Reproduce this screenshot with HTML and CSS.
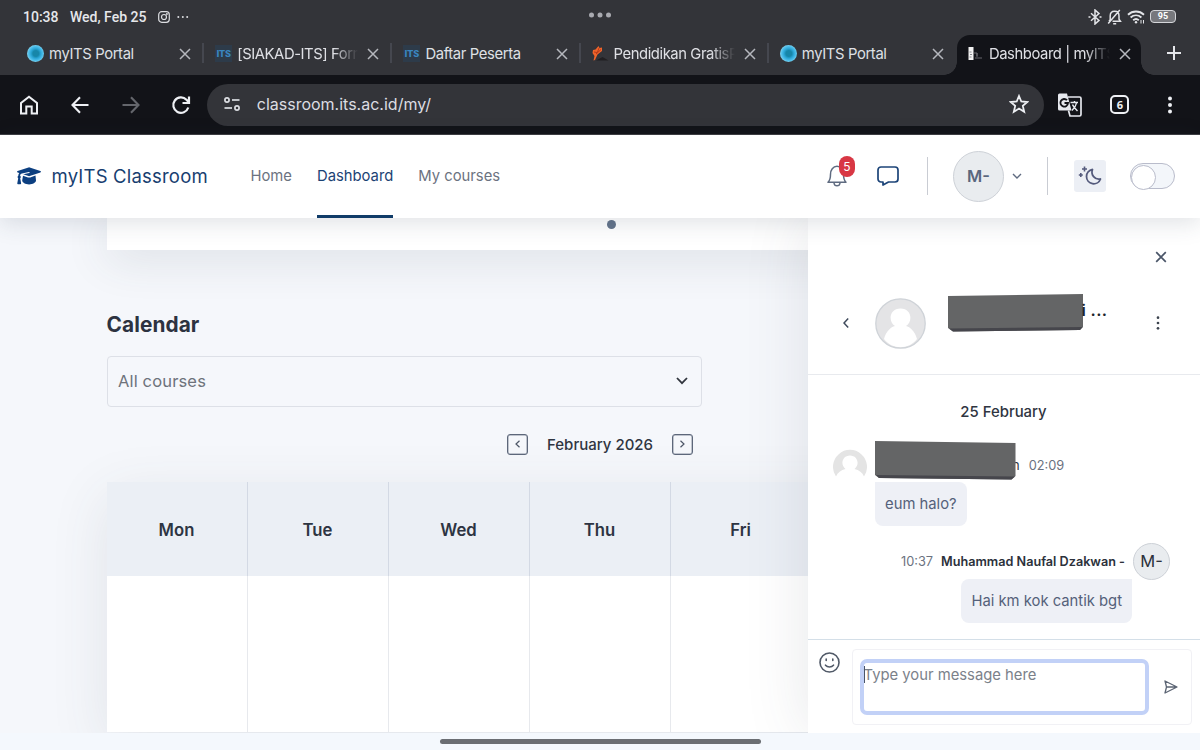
FILE: index.html
```html
<!DOCTYPE html>
<html lang="en">
<head>
    <meta charset="UTF-8">
    <meta name="viewport" content="width=device-width, initial-scale=1.0">
    <title>Dashboard | myITS Classroom</title>
    <link rel="stylesheet" href="styles.css">
</head>
<body>
    <!-- Status bar -->
    <div class="status-bar">
        <span class="clock">10:38</span>
        <span class="date">Wed, Feb 25</span>
        <svg class="insta" width="12" height="12" viewBox="0 0 12 12" fill="none" stroke="#dcdde1" stroke-width="1.2">
            <rect x="0.7" y="0.7" width="10.6" height="10.6" rx="3"/>
            <circle cx="6" cy="6" r="2.5"/>
            <circle cx="8.9" cy="3.1" r="0.4"/>
        </svg>
        <svg width="12" height="4" viewBox="0 0 12 4" fill="#dcdde1">
            <circle cx="1.3" cy="2" r="1"/><circle cx="5.8" cy="2" r="1"/><circle cx="10.2" cy="2" r="1"/>
        </svg>
        <svg class="window-dots" width="24" height="6" viewBox="0 0 24 6" fill="#a9aab0">
            <circle cx="3.5" cy="3" r="2.5"/><circle cx="12" cy="3" r="2.5"/><circle cx="20.5" cy="3" r="2.5"/>
        </svg>
        <div class="status-icons">
            <svg width="14" height="16" viewBox="0 0 14 16" fill="none" stroke="#e3e4e8" stroke-width="1.5">
                <path d="M3 4.2 11 11.4 7 15V1l4 3.6L3 11.8"/>
                <path d="M.5 8h2M11.5 8h2"/>
            </svg>
            <svg width="15" height="16" viewBox="0 0 15 16" fill="none" stroke="#e3e4e8" stroke-width="1.5">
                <path d="M3.2 11V7c0-3 2-4.8 4.4-4.8S12 4 12 7v3.2l1.4 2H5.5M2 12.2l1.2-1.4M6.2 14.7h3M12.8 1 1.2 14.6"/>
            </svg>
            <svg width="18" height="16" viewBox="0 0 18 16" fill="none" stroke="#e3e4e8" stroke-width="1.9">
                <path d="M1 5.700c4.600-4.200 11.400-4.200 16 0M3.600 8.500c3.200-2.900 7.600-2.900 10.800 0M6.200 11.200c1.700-1.500 3.900-1.500 5.600 0"/>
                <circle cx="9" cy="13.2" r="1.2" fill="#e3e4e8" stroke="none"/>
                <path d="M14 11v3.5M16.5 11v3.5" stroke-width="1"/>
            </svg>
            <div class="battery">95</div>
        </div>
    </div>

    <!-- Browser tabs -->
    <div class="tabs">
        <div class="tab">
            <span class="favicon favicon-portal"></span>
            <span class="tab-title">myITS Portal</span>
            <svg class="tab-close" width="12" height="12" viewBox="0 0 12 12"><path d="M1 1l10 10M11 1 1 11"/></svg>
        </div>
        <div class="tab">
            <span class="favicon favicon-its">ITS</span>
            <span class="tab-title fade">[SIAKAD-ITS] Form</span>
            <svg class="tab-close" width="12" height="12" viewBox="0 0 12 12"><path d="M1 1l10 10M11 1 1 11"/></svg>
        </div>
        <div class="tab">
            <span class="favicon favicon-its">ITS</span>
            <span class="tab-title">Daftar Peserta</span>
            <svg class="tab-close" width="12" height="12" viewBox="0 0 12 12"><path d="M1 1l10 10M11 1 1 11"/></svg>
        </div>
        <div class="tab">
            <svg class="favicon" width="17" height="17" viewBox="0 0 17 17">
                <path d="M4 15.5h12.500l-6-3.500z" fill="#211f22"/>
                <path d="M1.500 15.500 2.500 11 .5 8 1 5l2.500-.5L6.500 1l1 2 2.500-.5V6L5.500 9.500 3 15z" fill="#f0642a"/>
                <path d="M2 7l3 .5M4 9l5-4.500M7 3 5.500 7" stroke="#a92f16" stroke-width=".8"/>
            </svg>
            <span class="tab-title fade">Pendidikan GratisP</span>
            <svg class="tab-close" width="12" height="12" viewBox="0 0 12 12"><path d="M1 1l10 10M11 1 1 11"/></svg>
        </div>
        <div class="tab">
            <span class="favicon favicon-portal"></span>
            <span class="tab-title">myITS Portal</span>
            <svg class="tab-close" width="12" height="12" viewBox="0 0 12 12"><path d="M1 1l10 10M11 1 1 11"/></svg>
        </div>
        <div class="tab active">
            <svg class="favicon" width="17" height="17" viewBox="0 0 17 17">
                <rect x="1.500" y="2" width="5" height="13" fill="#f2f2f2"/>
                <path d="M2.500 7h2M3 9.500h2M2.500 12h2" stroke="#88898e"/>
                <path d="M7 8h3v3M8 13h7M10 8v4" stroke="#66676d" fill="none"/>
            </svg>
            <span class="tab-title fade">Dashboard | myITS</span>
            <svg class="tab-close" width="12" height="12" viewBox="0 0 12 12"><path d="M1 1l10 10M11 1 1 11"/></svg>
        </div>
        <svg class="new-tab" width="14" height="14" viewBox="0 0 14 14"><path d="M7 0v14M0 7h14"/></svg>
    </div>

    <!-- Toolbar -->
    <div class="toolbar">
        <div class="tool">
            <svg width="20" height="20" viewBox="0 0 20 20" fill="none" stroke="#eef0f4" stroke-width="2">
                <path d="M2 18.500V8l8-6.300L18 8v10.500h-5.300v-7H7.300v7z"/>
            </svg>
        </div>
        <div class="tool">
            <svg width="18" height="18" viewBox="0 0 18 18" fill="none" stroke="#eef0f4" stroke-width="2.1">
                <path d="M17.500 9H2M9 1.300 1.500 9 9 16.700"/>
            </svg>
        </div>
        <div class="tool">
            <svg width="18" height="18" viewBox="0 0 18 18" fill="none" stroke="#64666c" stroke-width="2.1">
                <path d="M.5 9H16M9 1.300 16.500 9 9 16.700"/>
            </svg>
        </div>
        <div class="tool">
            <svg width="20" height="20" viewBox="0 0 20 20" fill="none" stroke="#eef0f4" stroke-width="2.2">
                <path d="M17.300 12.500A7.700 7.700 0 1 1 15.500 4.700L18 7.500M18 1.500V8h-6.500"/>
            </svg>
        </div>
        <div class="address">
            <svg width="16" height="14" viewBox="0 0 16 14" fill="none" stroke="#dcdee3" stroke-width="1.7">
                <circle cx="3" cy="3" r="2.100"/><path d="M8 3h7.500"/>
                <circle cx="13" cy="11" r="2.100"/><path d="M.5 11H8"/>
            </svg>
            <span class="url">classroom.its.ac.id/my/</span>
            <svg width="20" height="20" viewBox="0 0 20 20" fill="none" stroke="#eef0f4" stroke-width="1.8">
                <path d="M10 2l2.300 5.500 6 .5-4.500 3.900 1.400 5.900-5.200-3.200-5.200 3.200 1.400-5.900L1.700 8l6-.5z"/>
            </svg>
        </div>
        <div class="tool">
            <svg width="25" height="24" viewBox="0 0 25 24">
                <path d="M2.500.5H10l4.500 17h-12A1.500 1.500 0 0 1 1 16V2A1.500 1.500 0 0 1 2.500.5z" fill="#e6e8ee"/>
                <path d="M11 4h11.500A1.500 1.500 0 0 1 24 5.500v16a1.500 1.500 0 0 1-1.500 1.500H13l-1.500-5.500" fill="none" stroke="#e6e8ee" stroke-width="1.7"/>
                <path d="M10 7.200A3.800 3.800 0 1 0 11 10H7.500" fill="none" stroke="#121318" stroke-width="1.9"/>
                <path d="M13.500 9.500h7.500M17.500 8v1.500M19.500 10c-.6 3.500-2.500 5.500-4.500 7.500M15.500 11.500c1 2.500 3 4.500 5 6.500" fill="none" stroke="#e6e8ee" stroke-width="1.4"/>
            </svg>
        </div>
        <div class="tool">
            <div class="tab-count">6</div>
        </div>
        <div class="tool">
            <svg width="4" height="18" viewBox="0 0 4 18" fill="#eef0f4">
                <circle cx="2" cy="2.500" r="2"/><circle cx="2" cy="9" r="2"/><circle cx="2" cy="15.500" r="2"/>
            </svg>
        </div>
    </div>

    <!-- Site header -->
    <header class="site-header">
        <svg width="24" height="18" viewBox="0 0 24 18" fill="#0c3f80">
            <path d="M11.500.4a2 2 0 0 1 1.200 0l10.700 3.700c.7.300.7 1 0 1.300L12.700 9.100a2 2 0 0 1-1.200 0L6.200 7.300l6-1.200c.8-.2.600-1.200-.2-1.100L5 6.400c-1.200.3-1.900 1.200-1.900 2.400.9.600.9 1.800.1 2.400l.9 5.100c.1.500-.2.900-.7.900H1c-.5 0-.8-.4-.7-.9l.9-5.100c-.8-.6-.8-1.800.1-2.400 0-1.100.3-2 1-2.800L.6 5.400c-.7-.3-.7-1 0-1.300z"/>
            <path d="M6 8.700l5 1.700a3.500 3.500 0 0 0 2.200 0l5.300-1.800.5 5c0 2-3.200 3.800-6.900 3.800s-6.900-1.800-6.900-3.800z"/>
        </svg>
        <a class="brand">myITS Classroom</a>
        <nav class="nav">
            <a>Home</a>
            <a class="current">Dashboard</a>
            <a>My courses</a>
        </nav>
        <div class="user-menu">
            <div class="bell">
                <svg width="20" height="22" viewBox="0 0 20 22" fill="none" stroke="#5f6b80" stroke-width="1.5" stroke-linejoin="round">
                    <path d="M1 17.200h18c-1.900-1.700-2.500-4-2.500-8C16.500 5 14 1.300 10 1.300S3.500 5 3.500 9.200c0 4-.6 6.300-2.500 8zM7 18c.5 3.800 5.500 3.800 6 0"/>
                </svg>
                <span class="badge">5</span>
            </div>
            <svg class="chat" width="22" height="20" viewBox="0 0 22 20" fill="none" stroke="#1c4478" stroke-width="1.7" stroke-linejoin="round">
                <path d="M4 1h14a3 3 0 0 1 3 3v9a3 3 0 0 1-3 3h-6.500L6 19v-3H4a3 3 0 0 1-3-3V4a3 3 0 0 1 3-3z"/>
            </svg>
            <span class="divider"></span>
            <span class="avatar">M-</span>
            <svg class="caret" width="10" height="6" viewBox="0 0 10 6" fill="none" stroke="#5f6b80" stroke-width="1.4"><path d="M1 1l4 4 4-4"/></svg>
            <span class="divider"></span>
            <span class="moon">
                <svg width="24" height="22" viewBox="0 0 24 22" fill="none" stroke="#545a7c" stroke-width="1.8">
                    <path d="M14.500 4.500A7.200 7.200 0 1 0 22.500 14 7 7 0 0 1 14.500 4.500z" stroke-linejoin="round"/>
                    <path d="M6.500 1.500v5M4 4h5M2.800 8v4M.8 10h4" stroke-width="1.6"/>
                </svg>
            </span>
            <span class="toggle"></span>
        </div>
    </header>

    <!-- Page -->
    <div class="page">
        <main class="content">
            <section class="slide-card"><span class="dot"></span></section>
            <h2>Calendar</h2>
            <div class="select">
                All courses
                <svg width="12" height="8" viewBox="0 0 12 8" fill="none" stroke="#30353d" stroke-width="1.8"><path d="M1 1l5 5.200L11 1"/></svg>
            </div>
            <div class="month">
                <span class="month-btn"><svg width="5" height="8" viewBox="0 0 5 8"><path d="M4.500.7 1 4l3.500 3.300"/></svg></span>
                <span class="month-name">February 2026</span>
                <span class="month-btn"><svg width="5" height="8" viewBox="0 0 5 8"><path d="M.5.7 4 4 .5 7.300"/></svg></span>
            </div>
            <div class="calendar">
                <div class="day">Mon</div>
                <div class="day">Tue</div>
                <div class="day">Wed</div>
                <div class="day">Thu</div>
                <div class="day">Fri</div>
                <div class="day">Sat</div>
                <div class="day">Sun</div>
                <div class="cell"></div>
                <div class="cell"></div>
                <div class="cell"></div>
                <div class="cell"></div>
                <div class="cell"></div>
                <div class="cell"></div>
                <div class="cell"></div>
            </div>
        </main>

        <!-- Message drawer -->
        <aside class="drawer">
            <div class="drawer-head">
                <svg class="drawer-close" width="12" height="12" viewBox="0 0 12 12"><path d="M1.200 1.200l9.600 9.600M10.800 1.200 1.200 10.800"/></svg>
                <div class="contact">
                    <svg width="6" height="10" viewBox="0 0 6 10" fill="none" stroke="#3f4a5c" stroke-width="1.5"><path d="M5.200.5 1 5l4.200 4.500"/></svg>
                    <svg class="contact-photo" width="51" height="51" viewBox="0 0 51 51">
                        <circle cx="25.500" cy="25.500" r="24.800" fill="#e4e4e6"/>
                        <path d="M9 41c2-8 7-12 11-13-7-4-6-17.500 5.500-17.500S38 24 31 28c4 1 9 5 11 13-8 11-25 11-33 0z" fill="#fff"/>
                        <circle cx="25.500" cy="25.500" r="24.700" fill="none" stroke="#cfd3d8" stroke-width="1.300"/>
                    </svg>
                    <svg class="redact" width="136" height="38" viewBox="0 0 136 38">
                        <path d="M0 2 135 0v33l-3 3L5 37.500 0 34z" fill="#646566"/>
                        <path d="M1 34.500 134.500 33l-2.500 3L5 37.500z" fill="#46464c"/>
                    </svg>
                    <span class="contact-tail">i ...</span>
                    <svg class="kebab" width="4" height="14" viewBox="0 0 4 14" fill="#3c434e">
                        <circle cx="2" cy="1.700" r="1.350"/><circle cx="2" cy="7" r="1.350"/><circle cx="2" cy="12.300" r="1.350"/>
                    </svg>
                </div>
            </div>
            <div class="messages">
                <div class="msg-date">25 February</div>
                <div class="sender">
                    <svg class="sender-photo" width="34" height="34" viewBox="0 0 34 34">
                        <path d="M3 28.500A17 17 0 1 1 31 28.500C29.500 24.500 26 22 21.500 21 27 17 25 7.500 17 7.500S7 17 12.500 21C8 22 4.500 24.500 3 28.500z" fill="#e4e4e4"/>
                    </svg>
                    <svg class="redact-small" width="141" height="39" viewBox="0 0 141 39">
                        <path d="M0 0 140.500 2v33l-4 3.500L4 37 0 34z" fill="#646566"/>
                        <path d="M1 34 140 35.500l-3.500 3L4 37z" fill="#46464c"/>
                    </svg>
                    <span class="name-tail">n</span>
                    <span class="time">02:09</span>
                </div>
                <div class="bubble bubble-in">eum halo?</div>
                <div class="sender mine">
                    <span class="time">10:37</span>
                    <strong>Muhammad Naufal Dzakwan -</strong>
                    <span class="avatar avatar-small">M-</span>
                </div>
                <div class="bubble bubble-out">Hai km kok cantik bgt</div>
            </div>
            <div class="composer">
                <svg class="emoji" width="21" height="21" viewBox="0 0 21 21" fill="none" stroke="#505967" stroke-width="1.6" stroke-linecap="round">
                    <circle cx="10.500" cy="10.500" r="9.500"/>
                    <path d="M6.500 13.200c2 2.300 6 2.300 8 0"/>
                    <path d="M7.200 7v1.400M13.800 7v1.400"/>
                </svg>
                <div class="composer-box">
                    <div class="input">Type your message here</div>
                    <svg width="14" height="14" viewBox="0 0 14 14" fill="none" stroke="#5b6473" stroke-width="1.3" stroke-linejoin="round">
                        <path d="M1 1l12 6L1 13l1.500-6zM2.500 7H13"/>
                    </svg>
                </div>
            </div>
        </aside>
    </div>
    <div class="gesture-bar"><span></span></div>
</body>
</html>
```
FILE: styles.css
```css
* {
    box-sizing: border-box;
}

body {
    margin: 0;
    width: 1200px;
    height: 750px;
    overflow: hidden;
    font-family: Inter, sans-serif;
    background-color: #f5f7fb;
    color: #5f6b80;
}

svg {
    display: block;
    flex: none;
}

/* Status bar */
.status-bar {
    position: relative;
    display: flex;
    align-items: center;
    height: 35px;
    padding: 0 24px 2px 23px;
    background-color: #333439;
    color: #e6e7eb;
    font: 500 14px Roboto, sans-serif;
}

.clock {
    width: 47px;
}

.date {
    width: 88px;
}

.insta {
    margin-right: 7px;
}

.window-dots {
    position: absolute;
    left: 588px;
    top: 12px;
}

.status-icons {
    display: flex;
    align-items: center;
    gap: 5px;
    margin-left: auto;
}

.battery {
    width: 26px;
    height: 13px;
    border: 1.5px solid #d5d6da;
    border-radius: 4px;
    background-color: #77787d;
    color: #fff;
    font: 700 9px/11px Roboto, sans-serif;
    text-align: center;
}

/* Tabs */
.tabs {
    display: flex;
    height: 40px;
    padding-left: 16px;
    background-color: #333439;
}

.tab {
    position: relative;
    display: flex;
    align-items: center;
    width: 188.2px;
    height: 40px;
    padding: 0 13px 3px 11px;
    color: #dfe0e5;
    font-size: 14.8px;
}

.tab:nth-child(-n+4)::after {
    content: "";
    position: absolute;
    right: 0;
    top: 8px;
    width: 2px;
    height: 20px;
    background-color: #45474f;
}

.tab.active {
    width: 184px;
    padding: 0 10px 3px 10px;
    border-radius: 13px 13px 0 0;
    background-color: #121318;
}

.tab.active::before,
.tab.active::after {
    content: "";
    position: absolute;
    bottom: 0;
    width: 13px;
    height: 13px;
}

.tab.active::before {
    left: -13px;
    background: radial-gradient(circle at 0 0, transparent 12.5px, #121318 13px);
}

.tab.active::after {
    right: -13px;
    background: radial-gradient(circle at 100% 0, transparent 12.5px, #121318 13px);
}

.favicon {
    flex: none;
    width: 17px;
    height: 17px;
    margin-right: 5px;
}

.favicon-portal {
    border-radius: 50%;
    background: radial-gradient(circle at 52% 50%, #1786a9 0 24%, #2ba6d6 40%, #4fbfeb 58%, #82d0ea 72%);
}

.favicon-its {
    background-color: #2d3b4a;
    color: #3a86c0;
    font: 900 9.5px/17px Roboto, sans-serif;
    text-align: center;
}

.tab-title {
    flex: 1;
    overflow: hidden;
    white-space: nowrap;
    margin-right: 9px;
    letter-spacing: -0.36px;
}

.tab-title.fade {
    letter-spacing: -0.42px;
    -webkit-mask-image: linear-gradient(to right, #000 80%, transparent);
    mask-image: linear-gradient(to right, #000 80%, transparent);
}

.tab-close {
    fill: none;
    stroke: #b5b7bd;
    stroke-width: 1.5;
}

.new-tab {
    margin: 11px 0 0 26px;
    stroke: #e6e7eb;
    stroke-width: 2;
}

/* Toolbar */
.toolbar {
    display: flex;
    align-items: center;
    height: 60px;
    padding: 0 4px 0 4px;
    border-bottom: 1px solid #3d3e43;
    background-color: #121318;
}

.tool {
    display: flex;
    justify-content: center;
    width: 50.7px;
}

.address {
    display: flex;
    align-items: center;
    width: 837px;
    height: 42px;
    padding: 0 15px 1px 17px;
    border-radius: 21px;
    background-color: #333439;
    color: #dcdde2;
    font-size: 16px;
}

.url {
    flex: 1;
    margin-left: 17px;
}

.tab-count {
    width: 19px;
    height: 19px;
    border: 2px solid #eef0f4;
    border-radius: 5px;
    color: #eef0f4;
    font: 700 11px/15px "Open Sans", sans-serif;
    text-align: center;
}

/* Site header */
.site-header {
    position: relative;
    z-index: 3;
    display: flex;
    align-items: center;
    height: 83px;
    padding: 0 25px 1px 17px;
    background-color: #fff;
    box-shadow: 0 5px 22px rgba(50, 60, 80, 0.15);
}

.brand {
    width: 199px;
    margin-left: 10.5px;
    color: #173e70;
    font-size: 18.5px;
    letter-spacing: 0.2px;
}

.nav {
    display: flex;
    gap: 25px;
    height: 83px;
    margin-bottom: -1px;
    font-size: 14.8px;
    line-height: 83px;
    color: #6b7280;
}

.nav .current {
    color: #1b4274;
    border-bottom: 3px solid #103c68;
}

.user-menu {
    display: flex;
    align-items: center;
    margin-left: auto;
}

.bell {
    position: relative;
    margin-right: 30px;
}

.badge {
    position: absolute;
    left: 12px;
    top: -9px;
    width: 16px;
    height: 21px;
    border-radius: 8px;
    background-color: #d83744;
    color: #fff;
    font-size: 12px;
    line-height: 21px;
    text-align: center;
}

.divider {
    width: 1px;
    height: 38px;
    margin: 0 25px 0 28px;
    background-color: #c9ccd3;
}

.caret {
    margin-left: 8px;
    margin-right: -3px;
}

.avatar {
    width: 51px;
    height: 51px;
    border: 1px solid #cdd1d7;
    border-radius: 50%;
    background-color: #e9ecef;
    color: #5a677e;
    font-size: 16.5px;
    font-weight: 600;
    line-height: 49px;
    text-align: center;
}

.moon {
    display: flex;
    align-items: center;
    justify-content: center;
    width: 32px;
    height: 32px;
    margin-left: 1px;
    border-radius: 3px;
    background-color: #eceff5;
}

.toggle {
    width: 45px;
    height: 26px;
    margin-left: 24px;
    border: 1px solid #b9bccb;
    border-radius: 13px;
    background-color: #f3f6fa;
}

.toggle::before {
    content: "";
    display: block;
    width: 23px;
    height: 23px;
    margin: 0.5px 0;
    border: 1px solid #b9bccb;
    border-radius: 50%;
    background-color: #fff;
}

/* Page */
.page {
    display: flex;
    height: 515px;
}

.content {
    width: 807.5px;
    padding-left: 106.5px;
    overflow: hidden;
}

.slide-card {
    display: flex;
    justify-content: center;
    width: 1010px;
    height: 32px;
    padding-top: 2px;
    background-color: #fff;
    box-shadow: 0 8px 45px rgba(60, 70, 85, 0.14);
}

.dot {
    width: 9px;
    height: 9px;
    border-radius: 50%;
    background-color: #64748b;
}

h2 {
    margin: 61px 0 17px;
    color: #2c3240;
    font-size: 20.8px;
    font-weight: 650;
    line-height: 28px;
    letter-spacing: 0.1px;
}

.select {
    display: flex;
    align-items: center;
    justify-content: space-between;
    width: 595px;
    height: 51px;
    padding: 0 13px 2px 10.5px;
    border: 1px solid #dde0e7;
    border-radius: 4px;
    color: #6e737b;
    font-size: 16.5px;
    letter-spacing: 0.15px;
}

.month {
    display: flex;
    align-items: center;
    justify-content: center;
    gap: 19px;
    width: 987px;
    height: 75px;
    padding-bottom: 1px;
}

.month-name {
    width: 106px;
    color: #2f3541;
    font-size: 15px;
    font-weight: 500;
    text-align: center;
    white-space: nowrap;
}

.month-btn {
    display: flex;
    align-items: center;
    justify-content: center;
    width: 21px;
    height: 21px;
    border: 1.5px solid #5d677a;
    border-radius: 3px;
    box-shadow: inset 0 0 0 0.5px #8a92a1;
}

.month-btn path {
    fill: none;
    stroke: #4c5566;
    stroke-width: 1.2;
}

.calendar {
    display: grid;
    grid-template-columns: repeat(7, 141px);
    grid-template-rows: 94px 156px;
    width: 987px;
    box-shadow: 0 15px 55px rgba(60, 70, 85, 0.11);
}

.day {
    border-right: 1px solid #d3d9e4;
    background-color: #ebeff5;
    color: #2d3442;
    font-size: 16.7px;
    font-weight: 600;
    line-height: 96px;
    text-align: center;
}

.cell {
    border-right: 1px solid #e7e9ed;
    background-color: #fff;
}

/* Message drawer */
.drawer {
    position: relative;
    z-index: 2;
    width: 392.5px;
    background-color: #fff;
    box-shadow: 0 0 60px rgba(60, 70, 85, 0.13);
}

.drawer-head {
    height: 157px;
    padding: 33px 0 0 35px;
    border-bottom: 1px solid #e8eaee;
}

.drawer-close {
    margin-left: 312.5px;
    fill: none;
    stroke: #4a5568;
    stroke-width: 1.7;
}

.contact {
    display: flex;
    align-items: center;
    height: 60px;
    margin-top: 30px;
}

.contact-photo {
    margin-left: 26px;
}

.redact {
    margin: -20px 0 0 22px;
}

.contact-tail {
    margin: -26px 0 0 -2px;
    color: #20242b;
    font-size: 16.5px;
    font-weight: 600;
    line-height: 24px;
    letter-spacing: 0.3px;
}

.kebab {
    margin: 0 40px 0 auto;
}

.messages {
    height: 264px;
    padding: 26px 30px 0 25.5px;
}

.msg-date {
    padding-left: 4px;
    color: #2f3541;
    font-size: 14.9px;
    font-weight: 550;
    line-height: 22px;
    text-align: center;
}

.sender {
    display: flex;
    align-items: center;
    height: 39px;
    margin-top: 18px;
    font-size: 13px;
}

.sender-photo {
    margin-top: 9px;
}

.redact-small {
    position: relative;
    z-index: 1;
    margin-left: 8px;
}

.name-tail {
    margin: 9px 9px 0 -4px;
    color: #2f3541;
}

.sender .time {
    color: #6b7280;
    font-size: 12.8px;
}

.sender > .redact-small ~ .time {
    margin-top: 9px;
}

.bubble {
    width: max-content;
    height: 44px;
    padding: 0 10px;
    border-radius: 8px;
    background-color: #eef0f6;
    color: #55617a;
    font-size: 14.8px;
    line-height: 45px;
}

.bubble-in {
    margin: 2px 0 0 42px;
    border-top-left-radius: 0;
}

.mine {
    justify-content: flex-end;
    margin-top: 17px;
    height: 37px;
}

.mine strong {
    margin: 0 8px;
    color: #2c313b;
    font-weight: 600;
    font-size: 12.65px;
}

.avatar-small {
    width: 37px;
    height: 37px;
    color: #2c313b;
    font-weight: 400;
    line-height: 35px;
}

.bubble-out {
    margin: -1px 38px 0 auto;
    border-top-right-radius: 0;
}

.composer {
    display: flex;
    align-items: flex-start;
    height: 94px;
    padding: 9px 8px 0 11.5px;
    border-top: 1px solid #d4dfe8;
}

.emoji {
    margin-top: 3px;
}

.composer-box {
    display: flex;
    align-items: center;
    justify-content: space-between;
    width: 340px;
    height: 76px;
    margin-left: 12px;
    padding: 0 13px 0 6.5px;
    border: 1px solid #f1f1f5;
    border-radius: 4px;
}

.input {
    position: relative;
    width: 289px;
    height: 56px;
    border: 4px solid #c2d1f7;
    border-radius: 7px;
    color: #7b818a;
    font-size: 14.8px;
    line-height: 24px;
}

/* text cursor */
.input::before {
    content: "";
    position: absolute;
    left: 0;
    top: 3px;
    width: 1px;
    height: 17px;
    background-color: #4a5568;
}

/* Gesture bar */
.gesture-bar {
    display: flex;
    align-items: center;
    justify-content: center;
    position: relative;
    z-index: 4;
    height: 17px;
    background-color: #f4f8fd;
}

.gesture-bar span {
    width: 321px;
    height: 5px;
    border-radius: 3px;
    background-color: #6b6e73;
}
```
